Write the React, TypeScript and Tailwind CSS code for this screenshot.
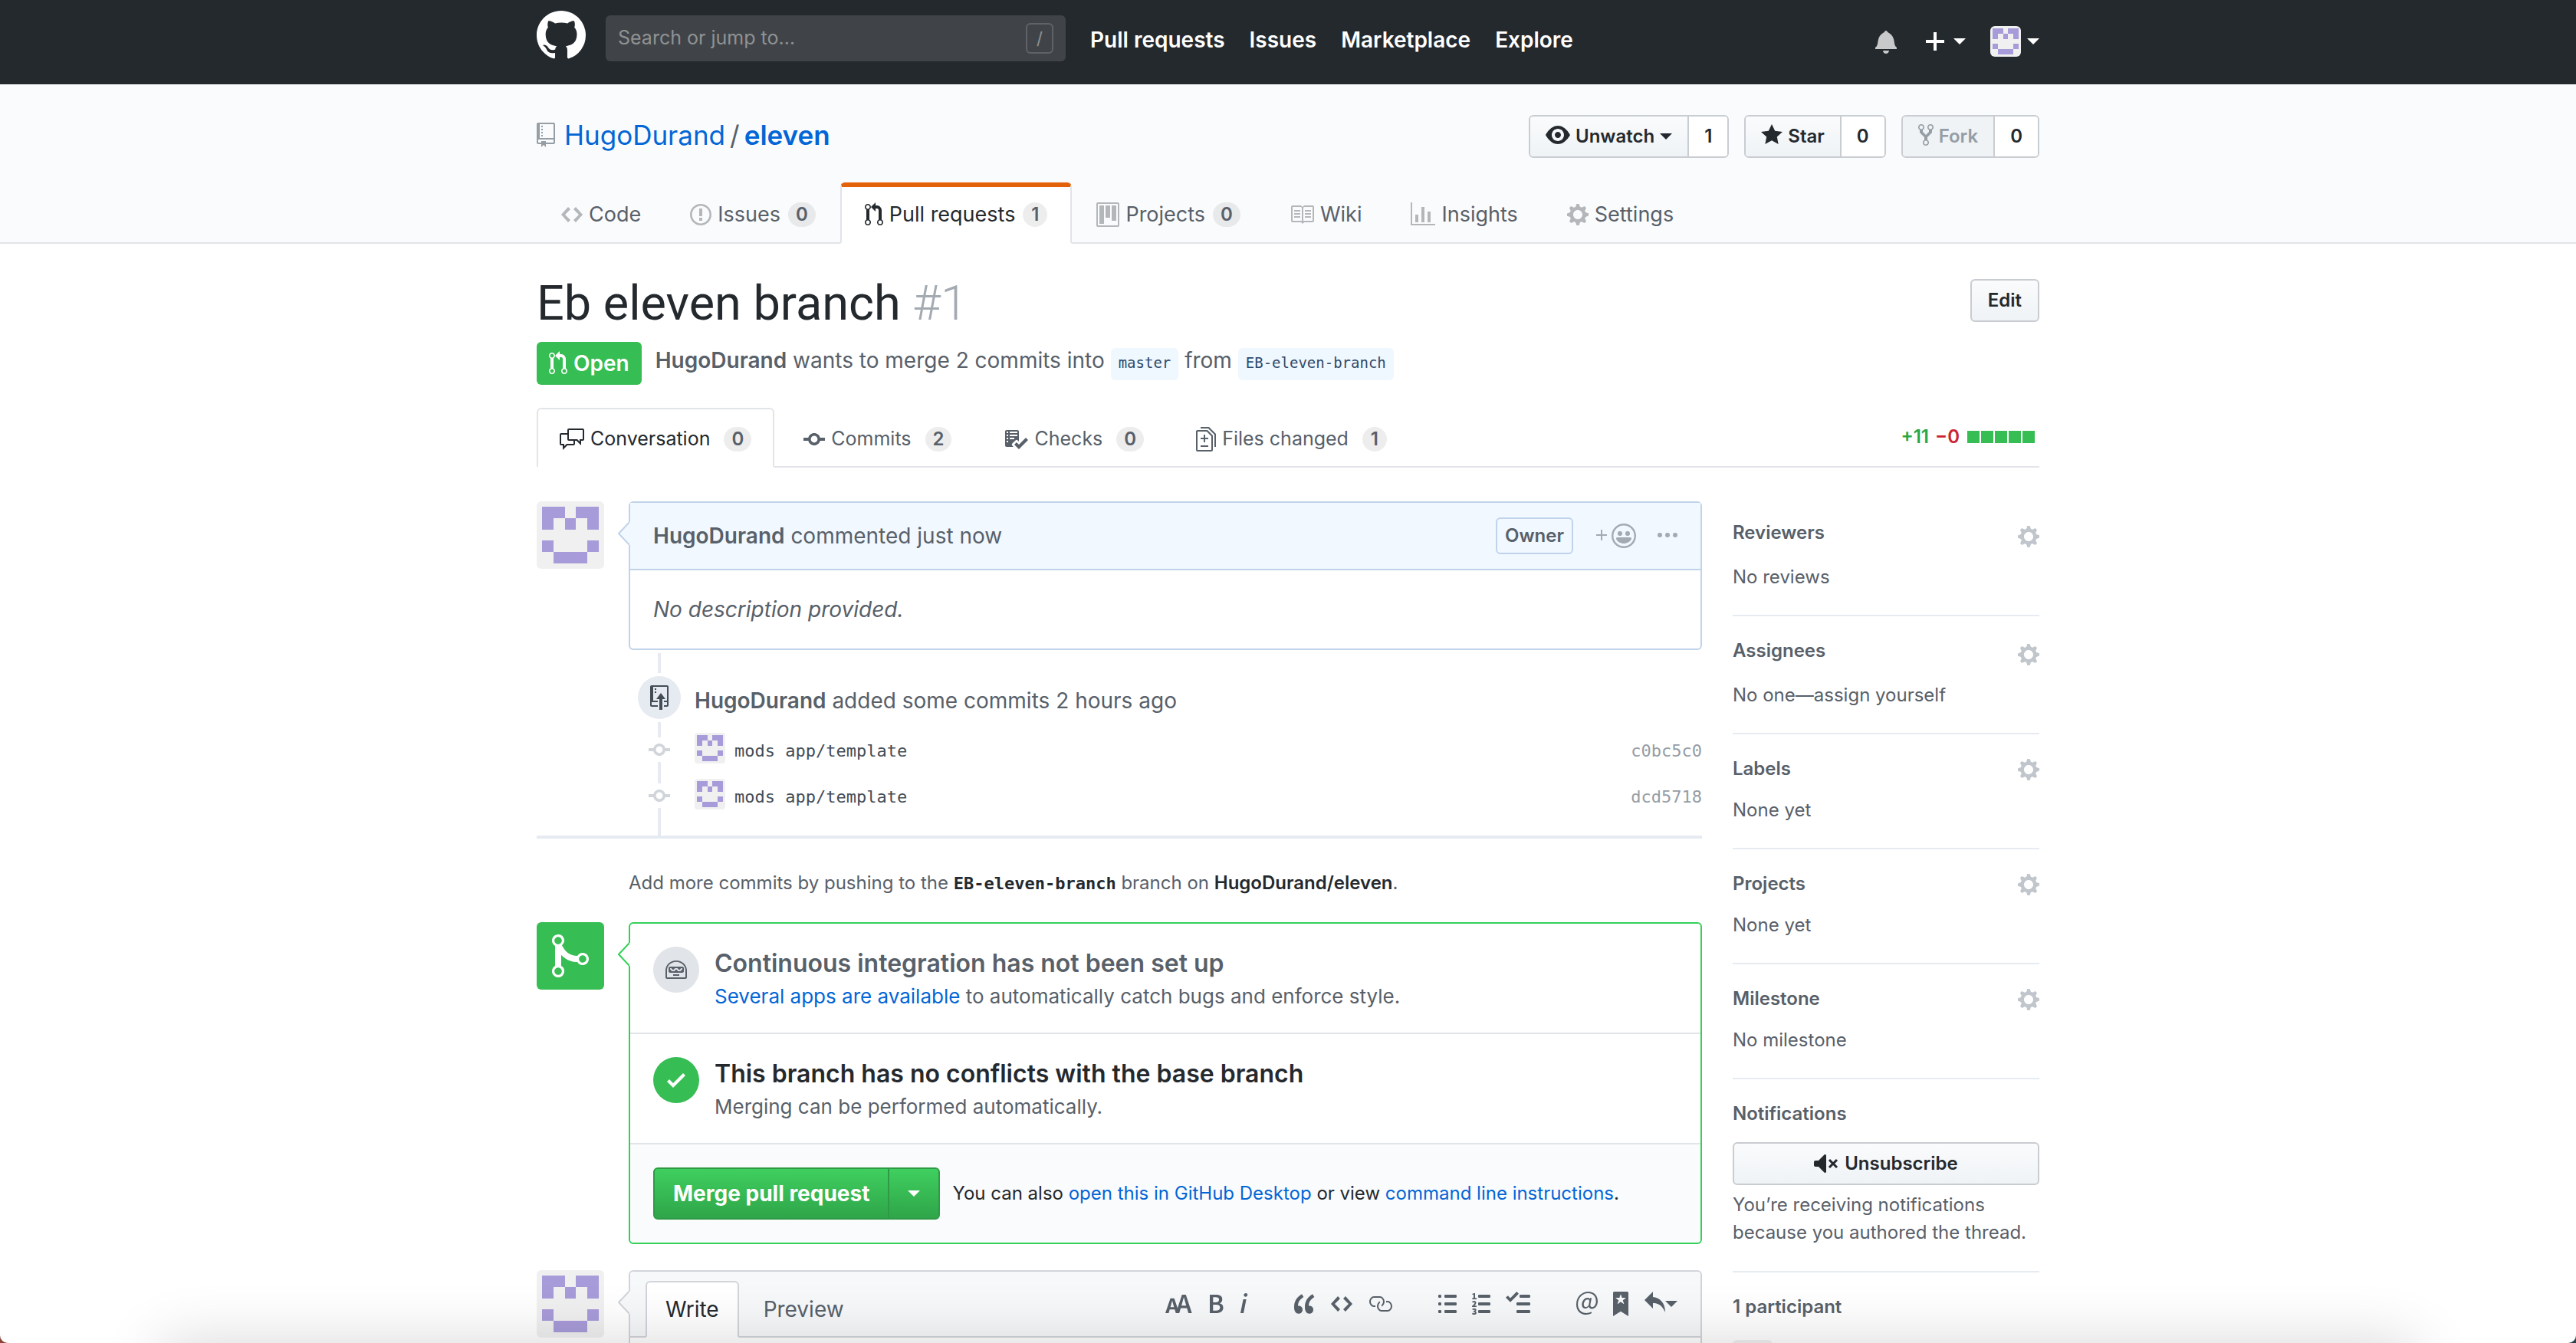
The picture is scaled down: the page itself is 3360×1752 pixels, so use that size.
import type { ReactNode } from "react";

type Glyph = { w: number; d: string };

const icons = {
  mark: { w: 16, d: "M8 0C3.58 0 0 3.58 0 8c0 3.54 2.29 6.53 5.47 7.59.4.07.55-.17.55-.38 0-.19-.01-.82-.01-1.49-2.01.37-2.53-.49-2.69-.94-.09-.23-.48-.94-.82-1.13-.28-.15-.68-.52-.01-.53.63-.01 1.08.58 1.23.82.72 1.21 1.87.87 2.33.66.07-.52.28-.87.51-1.07-1.78-.2-3.64-.89-3.64-3.95 0-.87.31-1.59.82-2.15-.08-.2-.36-1.02.08-2.12 0 0 .67-.21 2.2.82.64-.18 1.32-.27 2-.27.68 0 1.36.09 2 .27 1.53-1.04 2.2-.82 2.2-.82.44 1.1.16 1.92.08 2.12.51.56.82 1.27.82 2.15 0 3.07-1.87 3.75-3.65 3.95.29.25.54.73.54 1.48 0 1.07-.01 1.93-.01 2.2 0 .21.15.46.55.38A8.013 8.013 0 0 0 16 8c0-4.42-3.58-8-8-8z" },
  repo: { w: 12, d: "M4 9H3V8h1v1zm0-3H3v1h1V6zm0-2H3v1h1V4zm0-2H3v1h1V2zm8-1v12c0 .55-.45 1-1 1H6v2l-1.5-1.5L3 16v-2H1c-.55 0-1-.45-1-1V1c0-.55.45-1 1-1h10c.55 0 1 .45 1 1zm-1 10H1v2h2v-1h3v1h5v-2zm0-10H2v9h9V1z" },
  code: { w: 14, d: "M9.5 3L8 4.5 11.5 8 8 11.5 9.5 13 14 8 9.5 3zm-5 0L0 8l4.5 5L6 11.5 2.5 8 6 4.5 4.5 3z" },
  issue: { w: 14, d: "M7 2.3c3.14 0 5.7 2.56 5.7 5.7s-2.56 5.7-5.7 5.7A5.71 5.71 0 0 1 1.3 8c0-3.14 2.56-5.7 5.7-5.7zM7 1C3.14 1 0 4.14 0 8s3.14 7 7 7 7-3.14 7-7-3.14-7-7-7zm1 3H6v5h2V4zm0 6H6v2h2v-2z" },
  pull: { w: 12, d: "M11 11.28V5c-.03-.78-.34-1.47-.94-2.06C9.46 2.35 8.78 2.03 8 2H7V0L4 3l3 3V4h1c.27.02.48.11.69.31.21.2.3.42.31.69v6.28A1.993 1.993 0 0 0 10 15a1.993 1.993 0 0 0 1-3.72zm-1 2.92c-.66 0-1.2-.55-1.2-1.2 0-.65.55-1.2 1.2-1.2.65 0 1.2.55 1.2 1.2 0 .65-.55 1.2-1.2 1.2zM4 3c0-1.11-.89-2-2-2a1.993 1.993 0 0 0-1 3.72v6.56A1.993 1.993 0 0 0 2 15a1.993 1.993 0 0 0 1-3.72V4.72c.59-.34 1-.98 1-1.72zm-.8 10c0 .66-.55 1.2-1.2 1.2-.65 0-1.2-.55-1.2-1.2 0-.65.55-1.2 1.2-1.2.65 0 1.2.55 1.2 1.2zM2 4.2C1.34 4.2.8 3.65.8 3c0-.65.55-1.2 1.2-1.2.65 0 1.2.55 1.2 1.2 0 .65-.55 1.2-1.2 1.2z" },
  project: { w: 15, d: "M10 12h3V2h-3v10zm-4-2h3V2H6v8zm-4 4h3V2H2v12zm-1 1h13V1H1v14zM14 0H1a1 1 0 0 0-1 1v14a1 1 0 0 0 1 1h13a1 1 0 0 0 1-1V1a1 1 0 0 0-1-1z" },
  book: { w: 16, d: "M3 5h4v1H3V5zm0 3h4V7H3v1zm0 2h4V9H3v1zm11-5h-4v1h4V5zm0 2h-4v1h4V7zm0 2h-4v1h4V9zm2-6v9c0 .55-.45 1-1 1H9.5l-1 1-1-1H2c-.55 0-1-.45-1-1V3c0-.55.45-1 1-1h5.5l1 1 1-1H15c.55 0 1 .45 1 1zm-8 .5L7.5 3H2v9h6V3.5zm7-.5H9.5l-.5.5V12h6V3z" },
  graph: { w: 16, d: "M16 14v1H0V0h1v14h15zM5 13H3V8h2v5zm4 0H7V3h2v10zm4 0h-2V6h2v7z" },
  gear: { w: 14, d: "M14 8.77v-1.6l-1.94-.64-.45-1.09.88-1.84-1.13-1.13-1.81.91-1.09-.45-.69-1.92h-1.6l-.63 1.94-1.11.45-1.84-.88-1.13 1.13.91 1.81-.45 1.09L0 7.23v1.59l1.94.64.45 1.09-.88 1.84 1.13 1.13 1.81-.91 1.09.45.69 1.92h1.59l.63-1.94 1.11-.45 1.84.88 1.13-1.13-.92-1.81.47-1.09L14 8.75v.02zM7 11c-1.66 0-3-1.34-3-3s1.34-3 3-3 3 1.34 3 3-1.34 3-3 3z" },
  eye: { w: 16, d: "M8.06 2C3 2 0 8 0 8s3 6 8.06 6C13 14 16 8 16 8s-3-6-7.94-6zM8 12c-2.2 0-4-1.78-4-4 0-2.2 1.8-4 4-4 2.22 0 4 1.8 4 4 0 2.22-1.78 4-4 4zm2-4c0 1.11-.89 2-2 2-1.11 0-2-.89-2-2 0-1.11.89-2 2-2 1.11 0 2 .89 2 2z" },
  star: { w: 14, d: "M14 6l-4.9-.64L7 1 4.9 5.36 0 6l3.6 3.26L2.67 14 7 11.67 11.33 14l-.93-4.74L14 6z" },
  fork: { w: 10, d: "M8 1a1.993 1.993 0 0 0-1 3.72V6L5 8 3 6V4.72A1.993 1.993 0 0 0 2 1a1.993 1.993 0 0 0-1 3.72V6.5l3 3v1.78A1.993 1.993 0 0 0 5 15a1.993 1.993 0 0 0 1-3.72V9.5l3-3V4.72A1.993 1.993 0 0 0 8 1zM2 4.2C1.34 4.2.8 3.65.8 3c0-.65.55-1.2 1.2-1.2.65 0 1.2.55 1.2 1.2 0 .65-.55 1.2-1.2 1.2zm3 10c-.66 0-1.2-.55-1.2-1.2 0-.65.55-1.2 1.2-1.2.65 0 1.2.55 1.2 1.2 0 .65-.55 1.2-1.2 1.2zm3-10c-.66 0-1.2-.55-1.2-1.2 0-.65.55-1.2 1.2-1.2.65 0 1.2.55 1.2 1.2 0 .65-.55 1.2-1.2 1.2z" },
  bell: { w: 14, d: "M13.99 11.991v1H0v-1l.73-.58c.769-.769.809-2.547 1.189-4.416.77-3.767 4.077-4.996 4.077-4.996 0-.55.45-1 .999-1 .55 0 1 .45 1 1 0 0 3.387 1.229 4.156 4.996.38 1.879.42 3.657 1.19 4.417l.659.58h-.01zM6.995 15.99c1.11 0 1.999-.89 1.999-1.999H4.996c0 1.11.89 1.999 1.999 1.999z" },
  plus: { w: 12, d: "M12 9H7v5H5V9H0V7h5V2h2v5h5z" },
  discussion: { w: 16, d: "M15 1H6c-.55 0-1 .45-1 1v2H1c-.55 0-1 .45-1 1v6c0 .55.45 1 1 1h1v3l3-3h4c.55 0 1-.45 1-1V9h1l3 3V9h1c.55 0 1-.45 1-1V2c0-.55-.45-1-1-1zM9 11H4.5L3 12.5V11H1V5h4v3c0 .55.45 1 1 1h3v2zm6-3h-2v1.5L11.5 8H6V2h9v6z" },
  commit: { w: 14, d: "M10.86 7c-.45-1.72-2-3-3.86-3-1.86 0-3.41 1.28-3.86 3H0v2h3.14c.45 1.72 2 3 3.86 3 1.86 0 3.41-1.28 3.86-3H14V7h-3.14zM7 10.2c-1.22 0-2.2-.98-2.2-2.2 0-1.22.98-2.2 2.2-2.2 1.22 0 2.2.98 2.2 2.2 0 1.22-.98 2.2-2.2 2.2z" },
  checklist: { w: 16, d: "M16 8.5l-6 6-3-3L8.5 10l1.5 1.5L14.5 7 16 8.5zM5.7 12.2l.8.8H2c-.55 0-1-.45-1-1V3c0-.55.45-1 1-1h7c.55 0 1 .45 1 1v6.5l-.8-.8c-.39-.39-1.03-.39-1.42 0L5.7 10.8a.996.996 0 0 0 0 1.41v-.01zM4 4h5V3H4v1zm0 2h5V5H4v1zm0 2h3V7H4v1zM3 9H2v1h1V9zm0-2H2v1h1V7zm0-2H2v1h1V5zm0-2H2v1h1V3z" },
  diff: { w: 13, d: "M6 7h2v1H6v2H5V8H3V7h2V5h1v2zm-3 6h5v-1H3v1zM7.5 2L11 5.5V15c0 .55-.45 1-1 1H1c-.55 0-1-.45-1-1V3c0-.55.45-1 1-1h6.5zM10 6L7 3H1v12h9V6zM8.5 0H3v1h5l4 4v8h1V4.5L8.5 0z" },
  smiley: { w: 16, d: "M8 0C3.58 0 0 3.58 0 8s3.58 8 8 8 8-3.58 8-8-3.58-8-8-8zm4.81 12.81a6.72 6.72 0 0 1-2.17 1.45c-.83.36-1.72.53-2.64.53-.92 0-1.81-.17-2.64-.53-.81-.34-1.55-.83-2.17-1.45a6.773 6.773 0 0 1-1.45-2.17A6.59 6.59 0 0 1 1.21 8c0-.92.17-1.81.53-2.64.34-.81.83-1.55 1.45-2.17.62-.62 1.36-1.11 2.17-1.45A6.59 6.59 0 0 1 8 1.21c.92 0 1.81.17 2.64.53.81.34 1.55.83 2.17 1.45.62.62 1.11 1.36 1.45 2.17.36.83.53 1.72.53 2.64 0 .92-.17 1.81-.53 2.64-.34.81-.83 1.55-1.45 2.17zM4 6.8v-.59c0-.66.53-1.19 1.2-1.19h.59c.66 0 1.19.53 1.19 1.19v.59c0 .67-.53 1.2-1.19 1.2H5.2C4.53 8 4 7.47 4 6.8zm5 0v-.59c0-.66.53-1.19 1.2-1.19h.59c.66 0 1.19.53 1.19 1.19v.59c0 .67-.53 1.2-1.19 1.2h-.59C9.53 8 9 7.47 9 6.8zm4 3.2c-.72 1.88-2.91 3-5 3s-4.28-1.13-5-3c-.14-.39.23-1 .66-1h8.59c.41 0 .89.61.75 1z" },
  plusSmall: { w: 7, d: "M4 7V4H3v3H0v1h3v3h1V8h3V7H4z" },
  kebab: { w: 13, d: "M1.5 9a1.5 1.5 0 1 0 0-3 1.5 1.5 0 0 0 0 3zm5 0a1.5 1.5 0 1 0 0-3 1.5 1.5 0 0 0 0 3zM13 7.5a1.5 1.5 0 1 1-3 0 1.5 1.5 0 0 1 3 0z" },
  push: { w: 12, d: "M4 3H3V2h1v1zM3 5h1V4H3v1zm4 0L4 9h2v7h2V9h2L7 5zm4-5H1C.45 0 0 .45 0 1v12c0 .55.45 1 1 1h4v-1H1v-2h4v-1H2V1h9.02L11 10H9v1h2v2H9v1h2c.55 0 1-.45 1-1V1c0-.55-.45-1-1-1z" },
  merge: { w: 12, d: "M10 7c-.73 0-1.38.41-1.73 1.02V8C7.22 7.98 6 7.64 5.14 6.98c-.75-.58-1.5-1.61-1.89-2.44A1.993 1.993 0 0 0 2 .99C.89.99 0 1.89 0 3a2 2 0 0 0 1 1.72v6.56c-.59.35-1 .99-1 1.72 0 1.11.89 2 2 2a1.993 1.993 0 0 0 1-3.72V7.67c.67.7 1.44 1.27 2.3 1.69.86.42 2.03.63 2.97.64v-.02c.36.61 1 1.02 1.73 1.02 1.11 0 2-.89 2-2 0-1.11-.89-2-2-2zm-6.8 6c0 .66-.55 1.2-1.2 1.2-.65 0-1.2-.55-1.2-1.2 0-.65.55-1.2 1.2-1.2.65 0 1.2.55 1.2 1.2zM2 4.2C1.34 4.2.8 3.65.8 3c0-.65.55-1.2 1.2-1.2.65 0 1.2.55 1.2 1.2 0 .65-.55 1.2-1.2 1.2zm8 6c-.66 0-1.2-.55-1.2-1.2 0-.65.55-1.2 1.2-1.2.65 0 1.2.55 1.2 1.2 0 .65-.55 1.2-1.2 1.2z" },
  hubot: { w: 14, d: "M3 6c-.55 0-1 .45-1 1v2c0 .55.45 1 1 1h8c.55 0 1-.45 1-1V7c0-.55-.45-1-1-1H3zm8 1.75L9.75 9h-1.5L7 7.75 5.75 9h-1.5L3 7.75V7h.75L5 8.25 6.25 7h1.5L9 8.25 10.25 7H11v.75zM5 11h4v1H5v-1zm2-9C3.14 2 0 4.91 0 8.5V13c0 .55.45 1 1 1h12c.55 0 1-.45 1-1V8.5C14 4.91 10.86 2 7 2zm6 11H1V8.5c0-3.09 2.64-5.59 6-5.59s6 2.5 6 5.59V13z" },
  check: { w: 12, d: "M12 5l-8 8-4-4 1.5-1.5L4 10l6.5-6.5z" },
  mute: { w: 16, d: "M8 2.81v10.38c0 .67-.81 1-1.28.53L3 10H1c-.55 0-1-.45-1-1V7c0-.55.45-1 1-1h2l3.72-3.72C7.19 1.81 8 2.14 8 2.81zm7.53 3.22l-1.06-1.06-1.97 1.97-1.97-1.97-1.06 1.06L11.44 8 9.47 9.97l1.06 1.06 1.97-1.97 1.97 1.97 1.06-1.06L13.56 8l1.97-1.97z" },
  textSize: { w: 18, d: "M13.62 9.08L12.1 3.66h-.06l-1.5 5.42h3.08zM5.7 10.13S4.68 6.52 4.53 6.02h-.08l-1.13 4.11H5.7zM17.31 14h-2.25l-.95-3.25h-4.07L9.09 14H6.84l-.69-2.33H2.87L2.17 14H0l3.3-9.59h2.5l2.17 6.34L10.86 2h2.52l3.94 12h-.01z" },
  bold: { w: 10, d: "M1 2h3.83c2.48 0 4.3.75 4.3 2.95 0 1.14-.63 2.23-1.67 2.61v.06c1.33.3 2.3 1.23 2.3 2.86 0 2.39-1.97 3.52-4.61 3.52H1V2zm3.66 4.95c1.67 0 2.38-.66 2.38-1.69 0-1.17-.78-1.61-2.34-1.61H3.13v3.3h1.53zm.27 5.39c1.77 0 2.75-.64 2.75-1.98 0-1.27-.95-1.81-2.75-1.81h-1.8v3.8h1.8v-.01z" },
  italic: { w: 6, d: "M2.81 5h1.98L3 14H1l1.81-9zm.36-2.7c0-.7.58-1.3 1.33-1.3.56 0 1.13.38 1.13 1.03 0 .75-.59 1.3-1.33 1.3-.58 0-1.13-.38-1.13-1.03z" },
  quote: { w: 14, d: "M6.16 3.5C3.73 5.06 2.55 6.67 2.55 9.36c.16-.05.3-.05.44-.05 1.27 0 2.5.86 2.5 2.41 0 1.61-1.03 2.61-2.5 2.61-1.9 0-2.99-1.52-2.99-4.25 0-3.8 1.75-6.53 5.02-8.42L6.16 3.5zm7 0c-2.43 1.56-3.61 3.17-3.61 5.86.16-.05.3-.05.44-.05 1.27 0 2.5.86 2.5 2.41 0 1.61-1.03 2.61-2.5 2.61-1.89 0-2.98-1.52-2.98-4.25 0-3.8 1.75-6.53 5.02-8.42l1.14 1.84h-.01z" },
  link: { w: 16, d: "M4 9h1v1H4c-1.5 0-3-1.69-3-3.5S2.55 3 4 3h4c1.45 0 3 1.69 3 3.5 0 1.41-.91 2.72-2 3.25V8.59c.58-.45 1-1.27 1-2.09C10 5.22 8.98 4 8 4H4c-.98 0-2 1.22-2 2.5S3 9 4 9zm9-3h-1v1h1c1 0 2 1.22 2 2.5S13.98 12 13 12H9c-.98 0-2-1.22-2-2.5 0-.83.42-1.64 1-2.09V6.25c-1.09.53-2 1.84-2 3.25C6 11.31 7.55 13 9 13h4c1.45 0 3-1.69 3-3.5S14.5 6 13 6z" },
  bullets: { w: 12, d: "M2 13c0 .59 0 1-.59 1H.59C0 14 0 13.59 0 13c0-.59 0-1 .59-1h.81c.59 0 .59.41.59 1H2zm2.59-9h6.81c.59 0 .59-.41.59-1 0-.59 0-1-.59-1H4.59C4 2 4 2.41 4 3c0 .59 0 1 .59 1zM1.41 7H.59C0 7 0 7.41 0 8c0 .59 0 1 .59 1h.81c.59 0 .59-.41.59-1 0-.59 0-1-.59-1h.01zm0-5H.59C0 2 0 2.41 0 3c0 .59 0 1 .59 1h.81c.59 0 .59-.41.59-1 0-.59 0-1-.59-1h.01zm10 5H4.59C4 7 4 7.41 4 8c0 .59 0 1 .59 1h6.81c.59 0 .59-.41.59-1 0-.59 0-1-.59-1h.01zm0 5H4.59C4 12 4 12.41 4 13c0 .59 0 1 .59 1h6.81c.59 0 .59-.41.59-1 0-.59 0-1-.59-1h.01z" },
  numbers: { w: 12, d: "M12 13c0 .59 0 1-.59 1H4.59C4 14 4 13.59 4 13c0-.59 0-1 .59-1h6.81c.59 0 .59.41.59 1H12zM4.59 4h6.81c.59 0 .59-.41.59-1 0-.59 0-1-.59-1H4.59C4 2 4 2.41 4 3c0 .59 0 1 .59 1zm6.81 3H4.59C4 7 4 7.41 4 8c0 .59 0 1 .59 1h6.81c.59 0 .59-.41.59-1 0-.59 0-1-.59-1zM2 1h-.72c-.3.19-.58.25-1.03.34V2H1v2.14H.16V5H3v-.86H2V1zm.25 8.13c-.17 0-.45.03-.66.06.53-.56 1.14-1.25 1.14-1.89C2.72 6.52 2.17 6 1.38 6c-.59 0-.97.2-1.38.64l.58.58c.19-.19.38-.38.64-.38.28 0 .48.16.48.52 0 .53-.77 1.2-1.7 2.06V10h3l-.09-.88h-.66v.01zm-.08 3.78v-.03c.44-.19.64-.47.64-.86 0-.7-.56-1.11-1.44-1.11-.48 0-.89.19-1.28.52l.55.64c.25-.2.44-.31.69-.31.27 0 .42.13.42.36 0 .27-.2.44-.86.44v.75c.83 0 .98.17.98.47 0 .25-.23.38-.58.38-.28 0-.56-.14-.81-.38l-.48.66c.3.36.77.56 1.41.56.83 0 1.53-.41 1.53-1.16 0-.5-.31-.81-.77-.94v.01z" },
  tasks: { w: 16, d: "M15.41 9H7.59C7 9 7 8.59 7 8c0-.59 0-1 .59-1h7.81c.59 0 .59.41.59 1 0 .59 0 1-.59 1h.01zM9.59 4C9 4 9 3.59 9 3c0-.59 0-1 .59-1h5.81c.59 0 .59.41.59 1 0 .59 0 1-.59 1H9.59zM0 3.91l1.41-1.3L3 4.2 7.09 0 8.5 1.41 3 6.91l-3-3zM7.59 12h7.81c.59 0 .59.41.59 1 0 .59 0 1-.59 1H7.59C7 14 7 13.59 7 13c0-.59 0-1 .59-1z" },
  mention: { w: 14, d: "M6.58 15c1.25 0 2.52-.31 3.56-.94l-.42-.94c-.84.52-1.89.83-3.03.83-3.23 0-5.64-2.08-5.64-5.72 0-4.37 3.23-7.18 6.58-7.18 3.45 0 5.22 2.19 5.22 5.2 0 2.39-1.34 3.86-2.5 3.86-1.05 0-1.36-.73-1.05-2.19l.73-3.75H8.98l-.11.72c-.41-.63-.94-.83-1.56-.83-2.19 0-3.66 2.39-3.66 4.38 0 1.67.94 2.61 2.3 2.61.84 0 1.67-.53 2.3-1.25.11.94.94 1.45 1.98 1.45 1.67 0 3.77-1.67 3.77-5C14 2.61 11.59 0 7.83 0 3.66 0 0 3.33 0 8.33 0 12.71 2.92 15 6.58 15zm-.31-5c-.73 0-1.36-.52-1.36-1.67 0-1.45.94-3.22 2.41-3.22.52 0 .84.2 1.25.83l-.52 3.02c-.63.73-1.25 1.05-1.78 1.05V10z" },
  bookmark: { w: 10, d: "M9 0H1C.27 0 0 .27 0 1v15l5-3.09L10 16V1c0-.73-.27-1-1-1zm-.78 4.25L6.36 5.61l.72 2.16c.06.22-.02.28-.2.17L5 6.6 3.12 7.94c-.19.11-.25.05-.2-.17l.72-2.16-1.86-1.36c-.17-.16-.14-.23.09-.23l2.3-.03.7-2.16h.25l.7 2.16 2.3.03c.23 0 .27.08.09.23h.01z" },
  reply: { w: 14, d: "M6 3.5c3.92.44 8 3.125 8 10-2.312-5.062-4.75-6-8-6V11L.5 5.5 6 0v3.5z" },
} satisfies Record<string, Glyph>;

type IconName = keyof typeof icons;

function Icon({ name, scale = 2, className = "" }: { name: IconName; scale?: number; className?: string }) {
  const { w, d } = icons[name];
  return (
    <svg
      aria-hidden="true"
      className={`shrink-0 ${className}`}
      width={w * scale}
      height={16 * scale}
      viewBox={`0 0 ${w} 16`}
      fill="currentColor"
      fillRule="evenodd"
    >
      <path d={d} />
    </svg>
  );
}

function Caret() {
  return <span aria-hidden="true" className="size-0 shrink-0 border-x-8 border-t-8 border-x-transparent border-t-current" />;
}

function Avatar({ className }: { className: string }) {
  return (
    <svg role="img" aria-label="@HugoDurand" viewBox="0 0 12 12" className={`block shrink-0 bg-[#f0f0f0] ${className}`}>
      <path
        fill="#a89bd9"
        shapeRendering="crispEdges"
        d="M1 1h4v2H3v2H1zM7 1h4v4H9V3H7zM5 3h2v2H5zM1 7h2v2H1zM9 7h2v2H9zM3 9h6v2H3z"
      />
    </svg>
  );
}

function Counter({ children }: { children: ReactNode }) {
  return (
    <span className="min-w-8 rounded-full bg-[#1b1f23]/8 px-[10px] text-center text-[24px] leading-8 font-semibold text-[#586069]">
      {children}
    </span>
  );
}

function Pointer({ fill, stroke }: { fill: string; stroke: string }) {
  return (
    <svg aria-hidden="true" width="16" height="32" viewBox="0 0 16 32" className="absolute top-6 -left-4">
      <path d="M16 0L1 16l15 16" fill={fill} stroke={stroke} strokeWidth="2" />
      <path d="M15 1h1v30h-1z" fill={fill} />
    </svg>
  );
}

const social: { icon: IconName; label: string; count: number; caret?: boolean; off?: boolean }[] = [
  { icon: "eye", label: "Unwatch", count: 1, caret: true },
  { icon: "star", label: "Star", count: 0 },
  { icon: "fork", label: "Fork", count: 0, off: true },
];

const repoTabs: { icon: IconName; label: string; count?: number; active?: boolean }[] = [
  { icon: "code", label: "Code" },
  { icon: "issue", label: "Issues", count: 0 },
  { icon: "pull", label: "Pull requests", count: 1, active: true },
  { icon: "project", label: "Projects", count: 0 },
  { icon: "book", label: "Wiki" },
  { icon: "graph", label: "Insights" },
  { icon: "gear", label: "Settings" },
];

const pullTabs: { icon: IconName; label: string; count: number; active?: boolean }[] = [
  { icon: "discussion", label: "Conversation", count: 0, active: true },
  { icon: "commit", label: "Commits", count: 2 },
  { icon: "checklist", label: "Checks", count: 0 },
  { icon: "diff", label: "Files changed", count: 1 },
];

const commits = [
  { message: "mods app/template", sha: "c0bc5c0" },
  { message: "mods app/template", sha: "dcd5718" },
];

const sidebar = [
  { title: "Reviewers", text: "No reviews", tall: true },
  { title: "Assignees", text: "No one—assign yourself", tall: true },
  { title: "Labels", text: "None yet", tall: false },
  { title: "Projects", text: "None yet", tall: false },
  { title: "Milestone", text: "No milestone", tall: false },
];

const toolbar: { icon: IconName; label: string }[][] = [
  [
    { icon: "textSize", label: "Header" },
    { icon: "bold", label: "Bold" },
    { icon: "italic", label: "Italic" },
  ],
  [
    { icon: "quote", label: "Quote" },
    { icon: "code", label: "Code" },
    { icon: "link", label: "Link" },
  ],
  [
    { icon: "bullets", label: "Bulleted list" },
    { icon: "numbers", label: "Numbered list" },
    { icon: "tasks", label: "Task list" },
  ],
  [
    { icon: "mention", label: "Mention" },
    { icon: "bookmark", label: "Reference" },
    { icon: "reply", label: "Saved replies" },
  ],
];

function Header() {
  return (
    <header className="bg-[#24292e] pt-5 pb-[30px] text-white">
      <div className="mx-auto flex h-[60px] max-w-[1960px] items-center">
        <a href="#" aria-label="Homepage" className="pb-2">
          <Icon name="mark" scale={4} />
        </a>
        <div className="ml-[26px] flex h-[60px] w-[600px] items-center rounded-md bg-[#404448] pr-4 pl-4">
          <input
            type="text"
            aria-label="Search or jump to"
            placeholder="Search or jump to…"
            className="min-w-0 flex-1 bg-transparent text-[25px] outline-none placeholder:text-[#8f9294]"
          />
          <span className="flex h-10 w-9 items-center justify-center rounded-md border-2 border-[#5f6367] text-[22px] text-[#8f9294]">/</span>
        </div>
        <nav className="ml-8 flex items-center gap-8 pt-1 text-[28px] leading-[42px] font-semibold">
          <a href="#">Pull requests</a>
          <a href="#">Issues</a>
          <a href="#">Marketplace</a>
          <a href="#">Explore</a>
        </nav>
        <div className="ml-auto flex items-center pt-2">
          <button type="button" aria-label="Notifications" className="text-[#c8c9cb]">
            <Icon name="bell" />
          </button>
          <button type="button" aria-label="Create new" className="ml-[38px] flex items-center gap-3">
            <Icon name="plus" />
            <Caret />
          </button>
          <button type="button" aria-label="Profile menu" className="ml-8 flex items-center gap-2">
            <Avatar className="size-10 rounded-md" />
            <Caret />
          </button>
        </div>
      </div>
    </header>
  );
}

function RepoHead() {
  return (
    <div className="border-b-2 border-[#e1e4e8] bg-[#fafbfc] pt-10">
      <div className="mx-auto max-w-[1960px]">
        <div className="flex items-center justify-between">
          <div className="flex items-center pb-1 text-[35px] leading-[48px] text-[#0366d6]">
            <Icon name="repo" className="text-[#959da5]" />
            <a href="#" className="ml-3">HugoDurand</a>
            <span className="mx-[6px] text-[#586069]">/</span>
            <a href="#" className="font-semibold">eleven</a>
          </div>
          <div className="flex gap-5 text-[24px] leading-[52px] font-semibold text-[#24292e]">
            {social.map((s) => (
              <div key={s.label} className="flex rounded-md border-2 border-[#c9ccd0]">
                <button
                  type="button"
                  disabled={s.off}
                  className={`flex items-center gap-[7px] rounded-l border-r-2 border-[#c9ccd0] px-5 ${
                    s.off ? "bg-[#eff3f6] text-[#959da5]" : "bg-linear-to-b from-[#fafbfc] to-[#eff3f6]"
                  }`}
                >
                  <Icon name={s.icon} className="mb-1" />
                  {s.label}
                  {s.caret && <Caret />}
                </button>
                <a href="#" className="rounded-r bg-white px-5">{s.count}</a>
              </div>
            ))}
          </div>
        </div>
        <nav className="mt-8 -mb-[2px] flex">
          {repoTabs.map((t) => (
            <a
              key={t.label}
              href="#"
              className={`flex h-20 items-center rounded-t-md border-x-2 border-t-[6px] border-b-2 px-[30px] text-[27px] ${
                t.active
                  ? "border-x-[#e1e4e8] border-t-[#e36209] border-b-white bg-white text-[#24292e]"
                  : "border-transparent text-[#586069]"
              }`}
            >
              <Icon name={t.icon} className={`mr-2 ${t.active ? "" : "text-[#b4b7ba]"}`} />
              {t.label}
              {t.count !== undefined && (
                <span className="ml-[10px] flex">
                  <Counter>{t.count}</Counter>
                </span>
              )}
            </a>
          ))}
        </nav>
      </div>
    </div>
  );
}

function PullHead() {
  return (
    <>
      <div className="flex justify-between">
        <h1 className="font-[Roboto,sans-serif] text-[63px] leading-[76px] text-[#24292e]">
          Eb eleven branch <span className="font-light text-[#a3aab1]">#1</span>
        </h1>
        <div className="pt-[6px]">
          <button
            type="button"
            className="rounded-md border-2 border-[#c9ccd0] bg-linear-to-b from-[#fafbfc] to-[#eff3f6] px-[21px] text-[24px] leading-[52px] font-semibold text-[#24292e]"
          >
            Edit
          </button>
        </div>
      </div>
      <div className="mt-3 flex items-start">
        <span className="flex h-14 items-center gap-2 rounded-md bg-[#36bd53] px-4 text-[28px] font-semibold text-white">
          <Icon name="pull" />
          Open
        </span>
        <p className="ml-[18px] text-[28px] leading-[48px] text-[#586069]">
          <a href="#" className="font-semibold">HugoDurand</a> wants to merge 2 commits into{" "}
          <code className="rounded-md bg-[#eff7ff] px-[10px] pt-2 pb-3 font-['DejaVu_Sans_Mono',monospace] text-[19px] text-[#2f4a69]">master</code>{" "}
          from{" "}
          <code className="rounded-md bg-[#eff7ff] px-[10px] pt-2 pb-3 font-['DejaVu_Sans_Mono',monospace] text-[19px] text-[#2f4a69]">EB-eleven-branch</code>
        </p>
      </div>
      <div className="mt-[30px] flex border-b-2 border-[#e1e4e8]">
        <nav className="-mb-[2px] flex gap-2 text-[25px]">
          {pullTabs.map((t) => (
            <a
              key={t.label}
              href="#"
              className={`flex h-[78px] items-center rounded-t-md border-2 px-7 pt-1 ${
                t.active ? "border-[#e1e4e8] border-b-white bg-white text-[#24292e]" : "border-transparent text-[#586069]"
              }`}
            >
              <Icon name={t.icon} className="mr-2" />
              {t.label}
              <span className="ml-[18px] flex">
                <Counter>{t.count}</Counter>
              </span>
            </a>
          ))}
        </nav>
        <div className="ml-auto flex items-center pr-[6px] text-[24px] font-semibold">
          <span className="text-[#28a745]">+11</span>
          <span className="ml-2 text-[#cb2431]">−0</span>
          <span className="ml-[10px] flex gap-[2px]">
            {[0, 1, 2, 3, 4].map((n) => (
              <span key={n} className="size-4 bg-[#36bd53]" />
            ))}
          </span>
        </div>
      </div>
    </>
  );
}

function Comment() {
  return (
    <div className="flex items-start gap-8">
      <Avatar className="size-[88px] rounded-md" />
      <section className="relative min-w-0 flex-1 rounded-md border-2 border-[#c0d3eb]">
        <Pointer fill="#f1f8ff" stroke="#c0d3eb" />
        <header className="flex h-[88px] items-center border-b-2 border-[#c0d3eb] bg-[#f1f8ff] px-[30px] text-[28px] text-[#586069]">
          <p>
            <a href="#" className="font-semibold">HugoDurand</a> commented just now
          </p>
          <span className="ml-auto rounded-md border-2 border-[#c0d3eb] px-[10px] text-[24px] leading-[44px] font-semibold">Owner</span>
          <button type="button" aria-label="Add reaction" className="ml-[30px] flex items-center gap-[6px] text-[#a3aab1]">
            <Icon name="plusSmall" />
            <Icon name="smiley" />
          </button>
          <button type="button" aria-label="Show options" className="ml-[28px] text-[#a3aab1]">
            <Icon name="kebab" />
          </button>
        </header>
        <p className="p-[30px] text-[28px] leading-[42px] text-[#586069] italic">No description provided.</p>
      </section>
    </div>
  );
}

function Timeline() {
  return (
    <div className="flex gap-[18px] border-b-4 border-[#e6ebf1] pl-[132px]">
      <div className="flex w-14 flex-col items-center text-[#d1d5da]">
        <span className="mt-1 h-[26px] w-1 bg-[#e6ebf1]" />
        <span className="my-1 flex size-14 items-center justify-center rounded-full bg-[#e6ebf1] text-[#444d56]">
          <Icon name="push" />
        </span>
        <span className="h-5 w-1 bg-[#e6ebf1]" />
        <Icon name="commit" />
        <span className="h-7 w-1 bg-[#e6ebf1]" />
        <Icon name="commit" />
        <span className="h-9 w-1 bg-[#e6ebf1]" />
      </div>
      <div className="min-w-0 flex-1 pt-[42px]">
        <p className="text-[28px] leading-[48px] text-[#586069]">
          <a href="#" className="font-semibold">HugoDurand</a> added some commits 2 hours ago
        </p>
        <ul className="mt-[18px] flex flex-col gap-5">
          {commits.map((c) => (
            <li key={c.sha} className="flex h-10 items-end font-['DejaVu_Sans_Mono',monospace] text-[22px] leading-8">
              <Avatar className="mr-3 size-10 rounded" />
              <a href="#" className="text-[#444d56]">{c.message}</a>
              <a href="#" className="ml-auto text-[#959da5]">{c.sha}</a>
            </li>
          ))}
        </ul>
      </div>
    </div>
  );
}

function MergeBox() {
  return (
    <div className="mt-8 flex items-start gap-8">
      <span className="flex size-[88px] shrink-0 items-center justify-center rounded-md bg-[#36bd53] text-white">
        <Icon name="merge" scale={4} />
      </span>
      <section className="relative min-w-0 flex-1 rounded-md border-2 border-[#34d058]">
        <Pointer fill="#ffffff" stroke="#34d058" />
        <div className="flex gap-5 border-b-2 border-[#e1e4e8] px-[30px] pt-[30px] pb-[26px]">
          <span className="flex size-[60px] items-center justify-center rounded-full bg-[#e1e4e8] text-[#586069]">
            <Icon name="hubot" />
          </span>
          <div>
            <h3 className="text-[32px] leading-[44px] font-semibold text-[#586069]">Continuous integration has not been set up</h3>
            <p className="text-[26px] leading-[42px] text-[#586069]">
              <a href="#" className="text-[#0366d6]">Several apps are available</a> to automatically catch bugs and enforce style.
            </p>
          </div>
        </div>
        <div className="flex gap-5 border-b-2 border-[#e1e4e8] px-[30px] pt-[30px] pb-[26px]">
          <span className="flex size-[60px] items-center justify-center rounded-full bg-[#36bd53] text-white">
            <Icon name="check" />
          </span>
          <div>
            <h3 className="text-[32px] leading-[44px] font-semibold text-[#24292e]">This branch has no conflicts with the base branch</h3>
            <p className="text-[26px] leading-[42px] text-[#586069]">Merging can be performed automatically.</p>
          </div>
        </div>
        <div className="flex items-center gap-4 rounded-b-md bg-[#fafbfc] p-[30px] text-[24px]">
          <div className="flex rounded-md border-2 border-[#2f9a45] bg-linear-to-b from-[#3fcf5f] to-[#2fa549] text-white">
            <button type="button" className="px-6 text-[28px] leading-[64px] font-bold">Merge pull request</button>
            <button type="button" aria-label="Select merge method" className="flex items-center border-l-2 border-[#2f9a45] px-6">
              <Caret />
            </button>
          </div>
          <p className="text-[#24292e]">
            You can also <a href="#" className="text-[#0366d6]">open this in GitHub Desktop</a> or view{" "}
            <a href="#" className="text-[#0366d6]">command line instructions</a>.
          </p>
        </div>
      </section>
    </div>
  );
}

function CommentForm() {
  return (
    <div className="mt-[34px] flex items-start gap-8">
      <Avatar className="size-[88px] rounded-md" />
      <section className="relative min-w-0 flex-1 rounded-md border-2 border-[#d1d5da]">
        <Pointer fill="#f6f8fa" stroke="#d1d5da" />
        <div className="flex items-end rounded-t-md border-b-2 border-[#d1d5da] bg-[#f6f8fa] pt-3 pr-[30px] pl-5">
          <div role="tablist" className="-mb-[2px] flex text-[28px]">
            <button
              type="button"
              role="tab"
              aria-selected="true"
              className="h-[74px] rounded-t-md border-2 border-[#d1d5da] border-b-white bg-white px-6 text-[#24292e]"
            >
              Write
            </button>
            <button type="button" role="tab" aria-selected="false" className="h-[74px] px-8 text-[#586069]">
              Preview
            </button>
          </div>
          <div className="ml-auto flex items-center gap-[60px] pb-[26px] text-[#586069]">
            {toolbar.map((group, i) => (
              <div key={i} className="flex items-center gap-5">
                {group.map((b) => (
                  <button key={b.label} type="button" aria-label={b.label} className="flex items-center">
                    <Icon name={b.icon} />
                    {b.icon === "reply" && <Caret />}
                  </button>
                ))}
              </div>
            ))}
          </div>
        </div>
        <textarea aria-label="Comment" className="m-5 block h-[200px] w-[96%] rounded-md border-2 border-[#d1d5da]" />
      </section>
    </div>
  );
}

function Sidebar() {
  return (
    <aside className="-mt-1 w-[400px] shrink-0 text-[24px] text-[#586069]">
      {sidebar.map((s) => (
        <section key={s.title} className="border-b-2 border-[#e6ebf1] pt-[30px] pb-[31px]">
          <div className={`flex justify-between ${s.tall ? "h-10" : "h-8"}`}>
            <h2 className="leading-[30px] font-semibold">{s.title}</h2>
            <button type="button" aria-label={`Edit ${s.title}`} className="text-[#c0c6cc]">
              <Icon name="gear" />
            </button>
          </div>
          <p className={`leading-9 ${s.tall ? "mt-[15px]" : "mt-[19px]"}`}>{s.text}</p>
        </section>
      ))}
      <section className="border-b-2 border-[#e6ebf1] pt-[30px] pb-8">
        <h2 className="leading-[30px] font-semibold">Notifications</h2>
        <button
          type="button"
          className="mt-[22px] mb-2 flex w-full items-center justify-center gap-2 rounded-md border-2 border-[#c9ccd0] bg-linear-to-b from-[#fafbfc] to-[#eff3f6] leading-[52px] font-semibold text-[#24292e]"
        >
          <Icon name="mute" />
          Unsubscribe
        </button>
        <p className="leading-9">You’re receiving notifications because you authored the thread.</p>
      </section>
      <section className="pt-[30px]">
        <h2 className="leading-[30px] font-semibold">1 participant</h2>
        <a href="#" className="mt-7 block w-[52px]">
          <Avatar className="size-[52px] rounded-md" />
        </a>
      </section>
    </aside>
  );
}

export default function App() {
  return (
    <div className="bg-linear-to-r from-[#8a4438] to-[#29434e]">
      <div className="h-screen overflow-hidden rounded-b-[10px] bg-white font-[Inter,sans-serif]">
        <Header />
        <RepoHead />
        <main className="mx-auto max-w-[1960px] pt-10">
          <PullHead />
          <div className="mt-11 flex gap-10">
            <div className="min-w-0 flex-1">
              <Comment />
              <Timeline />
              <p className="mt-10 pl-[120px] text-[24px] leading-9 text-[#586069]">
                Add more commits by pushing to the{" "}
                <strong className="font-['DejaVu_Sans_Mono',monospace] text-[22px] font-bold text-[#24292e]">EB-eleven-branch</strong> branch on{" "}
                <strong className="font-semibold text-[#24292e]">HugoDurand/eleven</strong>.
              </p>
              <MergeBox />
              <CommentForm />
            </div>
            <Sidebar />
          </div>
        </main>
      </div>
      <div aria-hidden="true" className="pointer-events-none fixed inset-0 overflow-hidden">
        <div className="absolute inset-x-[210px] top-full h-60 shadow-[0_0_80px_rgba(0,0,0,0.16)]" />
      </div>
    </div>
  );
}
